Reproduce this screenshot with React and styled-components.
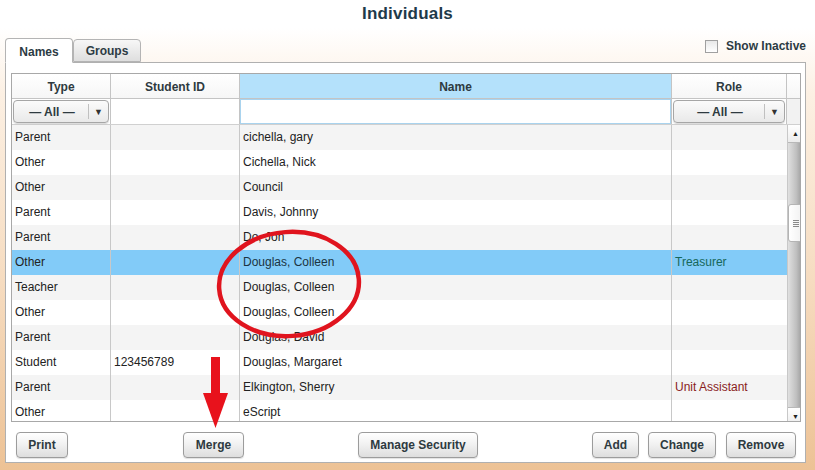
import React from "react";
import styled, { createGlobalStyle } from "styled-components";

const Global = createGlobalStyle`
  html, body { margin: 0; padding: 0; }
  body { font-family: "Liberation Sans", Arial, sans-serif; }
`;

const Page = styled.div`
  position: relative;
  width: 815px;
  height: 470px;
  overflow: hidden;
  display: flex;
  flex-direction: column;
  background: linear-gradient(180deg, #ffffff 0%, #ffffff 6%, #fcf0e3 20%, #f6dcc0 60%, #edc295 100%);
`;

const Title = styled.h1`
  margin: 0;
  height: 28px;
  line-height: 27px;
  text-align: center;
  font-size: 17px;
  font-weight: bold;
  color: #1e3a4a;
  letter-spacing: 0.2px;
`;

const TabRow = styled.div`
  display: flex;
  align-items: flex-end;
  margin: 11px 9px 0 5px;
  height: 24px;
  position: relative;
  z-index: 1;
`;

const Tab = styled.div`
  width: ${(p) => p.$w}px;
  height: ${(p) => (p.$active ? 25 : 23)}px;
  box-sizing: border-box;
  border: 1px solid #b4b4b4;
  border-bottom: ${(p) => (p.$active ? "1px solid #fff" : "1px solid #b4b4b4")};
  border-radius: 4px 4px 0 0;
  margin-bottom: ${(p) => (p.$active ? -1 : 0)}px;
  background: ${(p) =>
    p.$active ? "#ffffff" : "linear-gradient(180deg, #f7f7f7 0%, #dedede 100%)"};
  font-size: 12px;
  font-weight: bold;
  color: #2c3b44;
  display: flex;
  align-items: center;
  justify-content: center;
  padding-top: ${(p) => (p.$active ? 2 : 0)}px;
`;

const ShowInactive = styled.label`
  margin-left: auto;
  align-self: flex-start;
  margin-top: 1px;
  display: flex;
  align-items: center;
  gap: 8px;
  font-size: 12px;
  font-weight: bold;
  color: #2c3b44;
`;

const CheckBox = styled.span`
  width: 13px;
  height: 13px;
  box-sizing: border-box;
  border: 1px solid #a0a0a0;
  background: linear-gradient(180deg, #e8e8e8, #ffffff);
`;

const Panel = styled.div`
  flex: 1;
  margin: 0 9px 8px 5px;
  background: #fff;
  border: 1px solid #b0b0b0;
  padding: 10px 4px 4px 5px;
  display: flex;
  flex-direction: column;
`;

const COLS = "99px 129px 432px 115px 1fr";

const Table = styled.div`
  border: 1px solid #a8a8a8;
  display: flex;
  flex-direction: column;
`;

const HeaderRow = styled.div`
  display: grid;
  grid-template-columns: ${COLS};
  height: 24px;
  border-bottom: 1px solid #c4c4c4;
`;

const HeaderCell = styled.div`
  display: flex;
  align-items: center;
  justify-content: center;
  padding-top: 1px;
  font-size: 12px;
  font-weight: bold;
  color: #2e3a40;
  background: ${(p) => (p.$sorted ? "#b4e1fb" : "linear-gradient(180deg, #ffffff, #f6f6f6)")};
  border-right: ${(p) => (p.$last ? "none" : "1px solid #c4c4c4")};
`;

const FilterRow = styled.div`
  display: grid;
  grid-template-columns: ${COLS};
  height: 25px;
  border-bottom: 1px solid #d0d0d0;
`;

const FilterCell = styled.div`
  display: flex;
  align-items: stretch;
  padding: 1px;
  box-sizing: border-box;
  background: ${(p) => (p.$gutter ? "#f2f2f2" : "#fff")};
  border-right: ${(p) => (p.$last ? "none" : "1px solid #c4c4c4")};
`;

const TextInput = styled.div`
  flex: 1;
  margin: -1px;
  border: 1px solid ${(p) => (p.$focus ? "#a9d3ee" : "transparent")};
  background: #fff;
`;

const Select = styled.div`
  flex: 1;
  display: flex;
  align-items: center;
  border: 1px solid #a6a6a6;
  border-radius: 4px;
  background: linear-gradient(180deg, #fbfbfb 0%, #e9e9e9 100%);
  box-shadow: 0 1px 1px rgba(0, 0, 0, 0.15);
  font-size: 12px;
  font-weight: bold;
  color: #2e3a40;
`;

const SelectText = styled.span`
  flex: 1;
  text-align: center;
  padding-left: 2px;
`;

const SelectArrow = styled.span`
  width: 19px;
  height: 15px;
  border-left: 1px solid #c0c0c0;
  display: flex;
  align-items: center;
  justify-content: center;
  font-size: 9px;
  color: #333;
`;

const Body = styled.div`
  display: grid;
  grid-template-columns: 1fr 16px;
  height: 296px;
  overflow: hidden;
`;

const Rows = styled.div`
  display: flex;
  flex-direction: column;
`;

const Row = styled.div`
  display: grid;
  grid-template-columns: 99px 129px 432px 115px;
  height: 25px;
  flex: none;
  background: ${(p) => (p.$selected ? "#82cbf8" : p.$alt ? "#f4f4f4" : "#ffffff")};
`;

const Cell = styled.div`
  display: flex;
  align-items: center;
  padding: 0 0 2px 3px;
  font-size: 12px;
  color: ${(p) => p.$color || "#222"};
  border-right: ${(p) => (p.$last ? "none" : "1px solid #c8c8c8")};
  white-space: nowrap;
  overflow: hidden;
`;

const ScrollBar = styled.div`
  border-left: 1px solid #c8c8c8;
  display: flex;
  flex-direction: column;
  background: linear-gradient(90deg, #e0e0e0 0%, #c0c0c0 55%, #969696 100%);
`;

const ScrollBtn = styled.div`
  height: 17px;
  flex: none;
  background: linear-gradient(180deg, #ffffff, #ececec);
  border-bottom: ${(p) => (p.$top ? "1px solid #b8b8b8" : "none")};
  border-top: ${(p) => (p.$top ? "none" : "1px solid #b8b8b8")};
  display: flex;
  align-items: center;
  justify-content: center;
  font-size: 7px;
  color: #222;
`;

const Track = styled.div`
  flex: 1;
  position: relative;
`;

const Thumb = styled.div`
  position: absolute;
  left: 0;
  right: -1px;
  top: 61px;
  height: 36px;
  background: linear-gradient(90deg, #ffffff, #f0f0f0);
  border: 1px solid #b4b4b4;
  border-radius: 3px;
  display: flex;
  flex-direction: column;
  align-items: center;
  justify-content: center;
  gap: 1px;
`;

const Grip = styled.span`
  width: 6px;
  height: 1px;
  background: #8a8a8a;
`;

const ButtonBar = styled.div`
  display: flex;
  margin-top: 10px;
  padding: 0 5px;
`;

const Button = styled.button`
  height: 26px;
  width: ${(p) => p.$w}px;
  margin-left: ${(p) => (p.$ml === "auto" ? "auto" : `${p.$ml || 0}px`)};
  border: 1px solid #9c9c9c;
  border-radius: 4px;
  background: linear-gradient(180deg, #ffffff 0%, #f2f2f2 45%, #dedede 100%);
  box-shadow: 0 1px 1px rgba(0, 0, 0, 0.12);
  font-family: "Liberation Sans", Arial, sans-serif;
  font-size: 12px;
  font-weight: bold;
  color: #2e3a40;
  padding: 0;
`;

const Annotation = styled.svg`
  position: absolute;
  left: 0;
  top: 0;
  pointer-events: none;
`;

const rows = [
  ["Parent", "", "cichella, gary", ""],
  ["Other", "", "Cichella, Nick", ""],
  ["Other", "", "Council", ""],
  ["Parent", "", "Davis, Johnny", ""],
  ["Parent", "", "Do, Jon", ""],
  ["Other", "", "Douglas, Colleen", "Treasurer", "#17675a"],
  ["Teacher", "", "Douglas, Colleen", ""],
  ["Other", "", "Douglas, Colleen", ""],
  ["Parent", "", "Douglas, David", ""],
  ["Student", "123456789", "Douglas, Margaret", ""],
  ["Parent", "", "Elkington, Sherry", "Unit Assistant", "#8a1c1c"],
  ["Other", "", "eScript", ""],
];

export default function App() {
  return (
    <>
      <Global />
      <Page>
        <Title>Individuals</Title>
        <TabRow>
          <Tab $active $w={68}>Names</Tab>
          <Tab $w={68}>Groups</Tab>
          <ShowInactive>
            <CheckBox />
            Show Inactive
          </ShowInactive>
        </TabRow>
        <Panel>
          <Table>
            <HeaderRow>
              <HeaderCell>Type</HeaderCell>
              <HeaderCell>Student ID</HeaderCell>
              <HeaderCell $sorted>Name</HeaderCell>
              <HeaderCell>Role</HeaderCell>
              <HeaderCell $last />
            </HeaderRow>
            <FilterRow>
              <FilterCell>
                <Select>
                  <SelectText>— All —</SelectText>
                  <SelectArrow>▼</SelectArrow>
                </Select>
              </FilterCell>
              <FilterCell>
                <TextInput />
              </FilterCell>
              <FilterCell>
                <TextInput $focus />
              </FilterCell>
              <FilterCell>
                <Select>
                  <SelectText>— All —</SelectText>
                  <SelectArrow>▼</SelectArrow>
                </Select>
              </FilterCell>
              <FilterCell $last $gutter />
            </FilterRow>
            <Body>
              <Rows>
                {rows.map((r, i) => (
                  <Row key={i} $alt={i % 2 === 0} $selected={i === 5}>
                    <Cell>{r[0]}</Cell>
                    <Cell>{r[1]}</Cell>
                    <Cell $color={i === 5 ? "#1b3442" : undefined}>{r[2]}</Cell>
                    <Cell $last $color={r[4]}>{r[3]}</Cell>
                  </Row>
                ))}
              </Rows>
              <ScrollBar>
                <ScrollBtn $top>▲</ScrollBtn>
                <Track>
                  <Thumb>
                    <Grip />
                    <Grip />
                    <Grip />
                    <Grip />
                  </Thumb>
                </Track>
                <ScrollBtn>▼</ScrollBtn>
              </ScrollBar>
            </Body>
          </Table>
          <ButtonBar>
            <Button $w={52}>Print</Button>
            <Button $w={61} $ml={115}>Merge</Button>
            <Button $w={120} $ml={114}>Manage Security</Button>
            <Button $w={47} $ml="auto">Add</Button>
            <Button $w={68} $ml={9}>Change</Button>
            <Button $w={70} $ml={10}>Remove</Button>
          </ButtonBar>
        </Panel>
        <Annotation width="815" height="470" viewBox="0 0 815 470">
          <ellipse cx="289" cy="284" rx="70" ry="52" fill="none" stroke="#e0141e" strokeWidth="4.5" transform="rotate(-4 289 284)" />
          <rect x="211" y="357" width="9" height="38" fill="#e8121c" />
          <polygon points="203,393 228,393 215.5,428" fill="#e8121c" />
        </Annotation>
      </Page>
    </>
  );
}
